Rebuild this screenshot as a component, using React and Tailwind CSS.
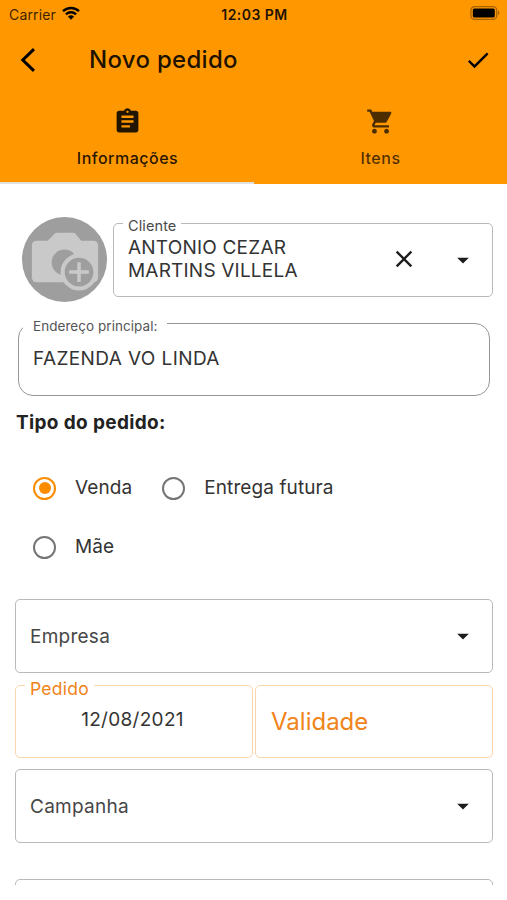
import { useState } from 'react';
import clsx from 'clsx';

const tabs = [
    { id: 'info', label: 'Informações', icon: AssignmentIcon },
    { id: 'items', label: 'Itens', icon: CartIcon },
];

function MaterialIcon({ d, className }) {
    return (
        <svg viewBox="0 0 24 24" fill="currentColor" className={clsx('shrink-0', className)}>
            <path d={d} />
        </svg>
    );
}

function AssignmentIcon() {
    return (
        <MaterialIcon
            className="size-[29px]"
            d="M19 3h-4.18C14.4 1.84 13.3 1 12 1c-1.3 0-2.4.84-2.82 2H5c-1.1 0-2 .9-2 2v14c0 1.1.9 2 2 2h14c1.1 0 2-.9 2-2V5c0-1.1-.9-2-2-2zm-7 0c.55 0 1 .45 1 1s-.45 1-1 1-1-.45-1-1 .45-1 1-1zm2 14H7v-2h7v2zm3-4H7v-2h10v2zm0-4H7V7h10v2z"
        />
    );
}

function CartIcon() {
    return (
        <MaterialIcon
            className="size-[29px]"
            d="M7 18c-1.1 0-1.99.9-1.99 2S5.9 22 7 22s2-.9 2-2-.9-2-2-2zM1 2v2h2l3.6 7.59-1.35 2.45c-.16.28-.25.61-.25.96 0 1.1.9 2 2 2h12v-2H7.42c-.14 0-.25-.11-.25-.25l.03-.12.9-1.63h7.45c.75 0 1.41-.41 1.75-1.03l3.58-6.49c.08-.14.12-.31.12-.48 0-.55-.45-1-1-1H5.21l-.94-2H1zm16 16c-1.1 0-1.99.9-1.99 2s.89 2 1.99 2 2-.9 2-2-.9-2-2-2z"
        />
    );
}

function DropdownIcon() {
    return <MaterialIcon className="mb-px size-7 text-[#1c1c1c]" d="M7 10l5 5 5-5z" />;
}

function StatusBar() {
    return (
        <div className="grid h-7 grid-cols-3 items-center pr-[7px] pl-[9px] text-[14px] text-black/80">
            <div className="flex items-center gap-[6px]">
                <span className="tracking-[0.15px]">Carrier</span>
                <svg viewBox="0 0 18 14" className="mb-[3px] h-[14px] w-[18px] text-black">
                    <path d="M1 5.2a11.6 11.6 0 0 1 16 0" fill="none" stroke="currentColor" strokeWidth="2.4" />
                    <path d="M3.9 8.3a7.4 7.4 0 0 1 10.2 0" fill="none" stroke="currentColor" strokeWidth="2.3" />
                    <path d="M9 13.8 5.9 10.6a4.5 4.5 0 0 1 6.2 0z" fill="currentColor" />
                </svg>
            </div>
            <span className="text-center font-semibold tracking-[0.45px] text-black/90">12:03 PM</span>
            <svg viewBox="0 0 30 14" className="mb-0.5 h-[14px] w-[30px] justify-self-end">
                <rect x="0.9" y="0.7" width="25.8" height="12.6" rx="3.6" fill="none" stroke="#000" strokeOpacity="0.35" strokeWidth="1.3" />
                <rect x="2.8" y="2.6" width="22" height="8.8" rx="1.5" />
                <path d="M28 4.8c1.9.6 1.9 3.8 0 4.4z" fillOpacity="0.35" />
            </svg>
        </div>
    );
}

// Outlined box with a label sitting over its top border
function OutlinedField({ label, labelClassName, className, children }) {
    return (
        <div className={clsx('relative flex items-center border', className)}>
            {label && (
                <span className={clsx('absolute bg-white whitespace-nowrap', labelClassName)}>{label}</span>
            )}
            {children}
        </div>
    );
}

function SelectField({ label, className }) {
    return (
        <OutlinedField className={clsx('h-[74px] justify-between rounded-[5px] border-[#b9b9b9] pr-[15px] pl-[14px]', className)}>
            <span className="pt-0.5 text-[19px] tracking-[0.25px] text-[#474747]">{label}</span>
            <DropdownIcon />
        </OutlinedField>
    );
}

function Radio({ label, checked, onSelect }) {
    return (
        <button type="button" onClick={onSelect} className="flex h-[58px] items-center gap-[19px]">
            <span
                className={clsx(
                    'flex size-[23px] items-center justify-center rounded-full border-[2.5px]',
                    checked ? 'border-[#fb8c00]' : 'border-[#757575]'
                )}
            >
                {checked && <span className="size-3 rounded-full bg-[#fb8c00]" />}
            </span>
            <span className="pt-px text-[19px] tracking-[0.1px] text-[#333]">{label}</span>
        </button>
    );
}

function PhotoPlaceholder() {
    return (
        <svg viewBox="0 0 86 86" className="mt-[-6px] mr-px size-[85px] shrink-0">
            <circle cx="43" cy="43" r="43" fill="#9e9e9e" />
            <path
                d="M15 24h11l7-7q1-1 3-1h15q2 0 3 1l6 7h12q5 0 5 5v32q0 5-5 5H15q-5 0-5-5V29q0-5 5-5z"
                fill="#c9c9c9"
            />
            <circle cx="43" cy="46" r="13" fill="#9e9e9e" />
            <circle cx="57.7" cy="55.7" r="18.7" fill="#c9c9c9" />
            <circle cx="57.7" cy="55.7" r="14.5" fill="#9e9e9e" />
            <path d="M57.7 45.7v20M47.7 55.7h20" stroke="#c9c9c9" strokeWidth="3.6" />
        </svg>
    );
}

export default function App() {
    const [activeTab, setActiveTab] = useState('info');
    const [orderType, setOrderType] = useState('Venda');

    return (
        <div className="h-[900px] w-[507px] overflow-hidden bg-white font-['Inter','Liberation_Sans',sans-serif]">
            {/* Header */}
            <header className="h-[184px] bg-[#ff9800]">
                <StatusBar />

                <div className="flex h-16 items-center pr-[15px] pl-5">
                    <svg viewBox="0 0 16 24" className="h-6 w-4 text-black" fill="none" stroke="currentColor" strokeWidth="3">
                        <path d="M14 1.2 2.8 12 14 22.8" />
                    </svg>
                    <h1 className="ml-[53px] flex-1 text-[24px] font-medium tracking-[0.3px] text-black/90">Novo pedido</h1>
                    <MaterialIcon className="size-7 text-black" d="M9 16.17L4.83 12l-1.42 1.41L9 19 21 7l-1.41-1.41z" />
                </div>

                <nav className="flex h-[92px]">
                    {tabs.map(({ id, label, icon: Icon }) => (
                        <button
                            key={id}
                            type="button"
                            onClick={() => setActiveTab(id)}
                            className={clsx(
                                'flex flex-1 flex-col items-center border-b-2 pt-[15px]',
                                activeTab === id ? 'border-[#e0e0e0] pl-px text-black/87' : 'border-transparent text-black/70'
                            )}
                        >
                            <Icon />
                            <span className="mt-[10px] text-[16px] leading-6 font-medium tracking-[0.5px]">{label}</span>
                        </button>
                    ))}
                </nav>
            </header>

            {/* Order form */}
            <main className="flex flex-col">
                <div className="mt-[39px] flex gap-[5px] pr-[14px] pl-[22px]">
                    <PhotoPlaceholder />
                    <OutlinedField
                        label="Cliente"
                        className="h-[74px] flex-1 rounded-[5px] border-[#b9b9b9] pr-[15px] pl-[14px]"
                        labelClassName="-top-[9px] left-[9px] px-[5px] text-[14.5px] leading-[22px] tracking-[0.1px] text-[#4a4a4a]"
                    >
                        <span className="mb-0.5 w-[200px] text-[19px] leading-[23px] tracking-[0.2px] text-[#333]">
                            ANTONIO CEZAR MARTINS VILLELA
                        </span>
                        <MaterialIcon
                            className="mr-[31px] mb-[3px] ml-auto size-7 text-[#1c1c1c]"
                            d="M19 6.41L17.59 5 12 10.59 6.41 5 5 6.41 10.59 12 5 17.59 6.41 19 12 13.41 17.59 19 19 17.59 13.41 12z"
                        />
                        <DropdownIcon />
                    </OutlinedField>
                </div>

                <OutlinedField
                    label="Endereço principal:"
                    className="mt-[21px] mr-[17px] ml-[18px] h-[73px] rounded-[15px] border-[1.5px] border-[#969696] pl-[14px]"
                    labelClassName="-top-2 left-1 pr-[10px] pl-[10px] text-[13.5px] leading-5 tracking-[0.05px] text-[#555]"
                >
                    <span className="text-[19px] tracking-[0.4px] text-[#333]">FAZENDA VO LINDA</span>
                </OutlinedField>

                <h2 className="mt-[13px] ml-4 text-[19px] leading-7 font-bold tracking-[0.35px] text-[#222]">Tipo do pedido:</h2>

                <div className="mt-[22px] flex flex-wrap gap-x-[30px] gap-y-px pr-[110px] pl-[33px]">
                    {['Venda', 'Entrega futura', 'Mãe'].map((type) => (
                        <Radio
                            key={type}
                            label={type}
                            checked={orderType === type}
                            onSelect={() => setOrderType(type)}
                        />
                    ))}
                </div>

                <SelectField label="Empresa" className="mt-[23px] mr-[14px] ml-[15px]" />

                <div className="mt-3 mr-[14px] ml-[15px] grid grid-cols-2 gap-0.5">
                    <OutlinedField
                        label="Pedido"
                        className="h-[73px] justify-center rounded-[5px] border-[#fdd5aa]"
                        labelClassName="-top-[9px] left-[9px] px-[5px] text-[17.5px] leading-6 tracking-[0.25px] text-[#f08319]"
                    >
                        <span className="mr-[3px] mb-[3px] text-[19px] tracking-[0.3px] text-[#333]">12/08/2021</span>
                    </OutlinedField>
                    <OutlinedField className="h-[73px] rounded-[5px] border-[#fdd5aa] pl-[15px]">
                        <span className="text-[24px] text-[#f08319]">Validade</span>
                    </OutlinedField>
                </div>

                <SelectField label="Campanha" className="mt-[11px] mr-[14px] ml-[15px]" />

                {/* Next field, cut off by the end of the scroll area */}
                <div className="mt-9 mr-[14px] ml-[15px] h-[6px] shrink-0 overflow-hidden">
                    <OutlinedField className="h-[75px] rounded-[5px] border-[#b9b9b9]" />
                </div>
            </main>
        </div>
    );
}
